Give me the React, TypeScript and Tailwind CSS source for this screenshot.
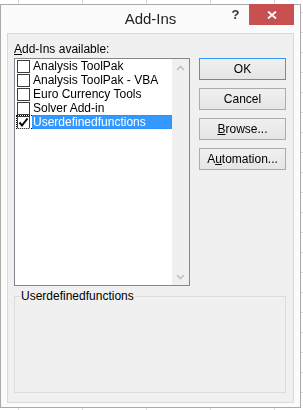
import React from "react";

const items = [
  "Analysis ToolPak",
  "Analysis ToolPak - VBA",
  "Euro Currency Tools",
  "Solver Add-in",
  "Userdefinedfunctions",
];

function Row({ text, sel }: { text: string; sel: boolean }) {
  return (
    <div className="relative h-[14px] flex">
      <div className="w-[17px] pl-[2px] pt-[1px] shrink-0">
        <div className="w-[13px] h-[13px] border border-[#3c3c3c] bg-white">
          {sel && (
            <svg width="11" height="11" viewBox="0 0 11 11" className="block">
              <path d="M1.5 5.5 L4 8.5 L9.5 1.5" stroke="#000" strokeWidth="2" fill="none" />
            </svg>
          )}
        </div>
      </div>
      <div
        className={
          sel
            ? "flex-1 ml-[0px] pl-[1px] whitespace-nowrap bg-[#3399ff] text-white"
            : "flex-1 pl-[1px] whitespace-nowrap"
        }
      >
        {text}
      </div>
      {sel && (
        <span className="absolute left-[1px] top-0 right-0 bottom-0 border border-dotted border-white mix-blend-difference pointer-events-none" />
      )}
    </div>
  );
}

function Btn({ children, def }: { children: React.ReactNode; def?: boolean }) {
  return (
    <div
      className={
        def
          ? "h-[22px] border border-[#3399ff] bg-[linear-gradient(#f0f0f0,#e5e5e5)] flex items-center justify-center"
          : "h-[22px] border border-[#acacac] bg-[linear-gradient(#f0f0f0,#e5e5e5)] flex items-center justify-center"
      }
    >
      {children}
    </div>
  );
}

export default function App() {
  return (
    <div className="w-[303px] h-[410px] overflow-hidden bg-white bg-[linear-gradient(to_right,#dadada_1px,transparent_1px),linear-gradient(to_bottom,#dadada_1px,transparent_1px)] bg-[size:64px_20px] bg-[position:18px_12px] pt-[4px] font-['Liberation_Sans',Arial,sans-serif] text-[12px] leading-[14px] text-black">
      <div className="w-[301px] h-[404px] border border-[#aaaaaa] bg-[#fbfbfb] flex flex-col px-[6px] pb-[4px]">
        <div className="relative h-[28px] flex items-center justify-center shrink-0">
          <span className="text-[15px] leading-[28px] text-[#222]">Add-Ins</span>
          <div className="absolute right-0 top-[-1px] flex h-[21px]">
            <div className="w-[27px] flex items-center justify-center font-bold text-[13px] text-[#333]">?</div>
            <div className="w-[45px] bg-[#c75050] flex items-center justify-center">
              <svg width="10" height="8" viewBox="0 0 10 8" className="block">
                <path d="M1 0.5 L9 7.5 M9 0.5 L1 7.5" stroke="#fff" strokeWidth="1.8" fill="none" />
              </svg>
            </div>
          </div>
        </div>
        <div className="flex-1 border border-[#d9d9d9] bg-[#f0f0f0] flex flex-col pt-[8px] pl-[6px] pr-[7px] pb-[9px]">
          <div className="h-[14px] mb-[2px] whitespace-nowrap">
            <span className="underline">A</span>dd-Ins available:
          </div>
          <div className="flex">
            <div className="w-[176px] h-[228px] border border-[#828790] bg-white flex">
              <div className="flex-1 flex flex-col">
                {items.map((t, i) => (
                  <Row key={t} text={t} sel={i === 4} />
                ))}
              </div>
              <div className="w-[17px] bg-[#f0f0f0] flex flex-col justify-between">
                <div className="h-[17px] flex items-center justify-center">
                  <svg width="9" height="6" viewBox="0 0 9 6" className="block">
                    <path d="M1 5 L4.5 1.5 L8 5" stroke="#c2c2c2" strokeWidth="1.6" fill="none" />
                  </svg>
                </div>
                <div className="h-[17px] flex items-center justify-center">
                  <svg width="9" height="6" viewBox="0 0 9 6" className="block">
                    <path d="M1 1 L4.5 4.5 L8 1" stroke="#c2c2c2" strokeWidth="1.6" fill="none" />
                  </svg>
                </div>
              </div>
            </div>
            <div className="ml-[9px] w-[87px] flex flex-col gap-[8px]">
              <Btn def>OK</Btn>
              <Btn>Cancel</Btn>
              <Btn>
                <span>
                  <span className="underline">B</span>rowse...
                </span>
              </Btn>
              <Btn>
                <span>
                  A<span className="underline">u</span>tomation...
                </span>
              </Btn>
            </div>
          </div>
          <div className="relative mt-[10px] h-[97px] border border-[#dcdcdc]">
            <span className="absolute -top-[8px] left-[5px] px-[1px] bg-[#f0f0f0] leading-[14px] whitespace-nowrap">
              Userdefinedfunctions
            </span>
          </div>
        </div>
      </div>
    </div>
  );
}
